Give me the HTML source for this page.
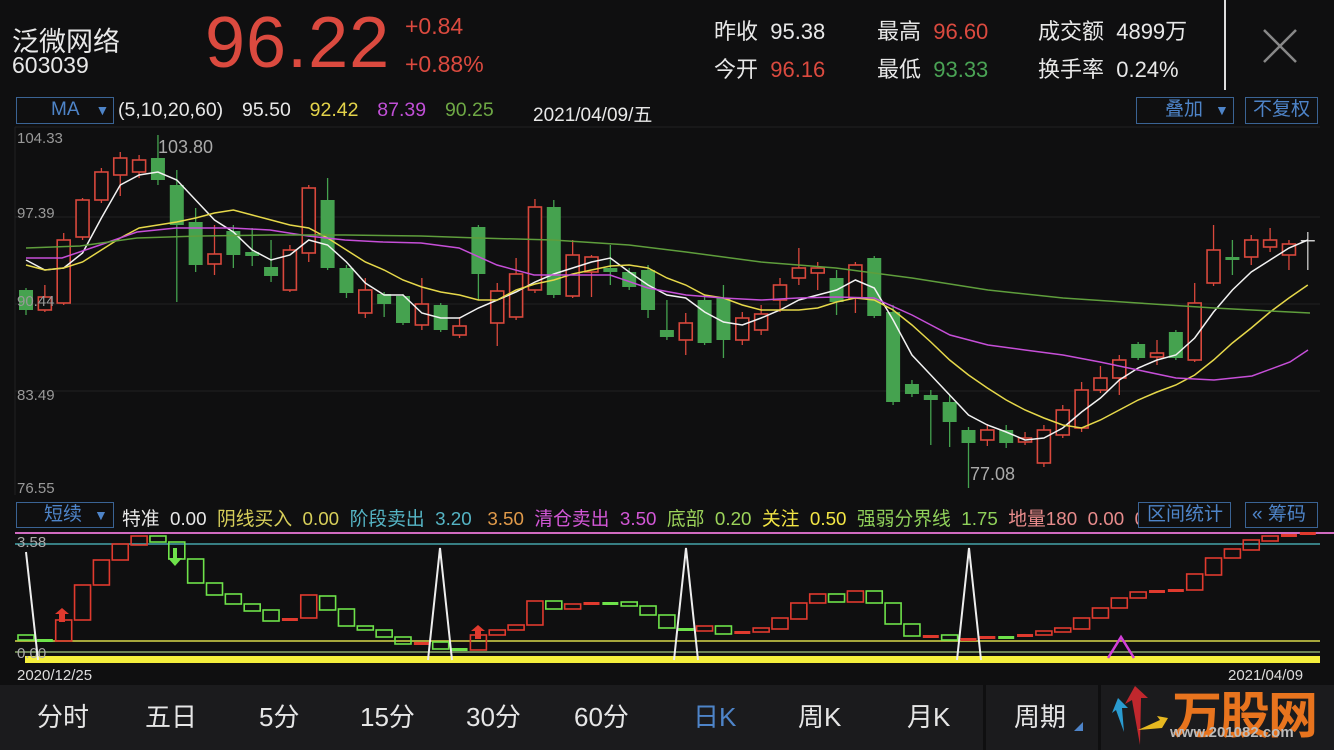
<!DOCTYPE html>
<html><head><meta charset="utf-8"><style>
body{margin:0;width:1334px;height:750px;background:#0f0f10;overflow:hidden;font-family:"Liberation Sans","Noto Sans CJK SC",sans-serif;color:#e8e8e8;position:relative}
.a{position:absolute;white-space:nowrap}
.r{color:#db4a3f}.g{color:#4aa355}
.box{position:absolute;border:1px solid #3a6394;color:#4e84c8;font-size:19px;box-sizing:border-box;line-height:24px}
.bb{position:absolute;top:685px;height:65px;font-size:26px;color:#e6e6e6;line-height:65px}
</style></head><body>
<div class="a" style="left:12px;top:20px;font-size:27px">泛微网络</div>
<div class="a" style="left:12px;top:52px;font-size:23px">603039</div>
<div class="a r" style="left:205px;top:2px;font-size:72px;letter-spacing:1px">96.22</div>
<div class="a r" style="left:405px;top:13px;font-size:23px">+0.84</div>
<div class="a r" style="left:405px;top:51px;font-size:23px">+0.88%</div>
<div class="a" style="left:714px;top:14px;font-size:22px">昨收&nbsp; 95.38</div>
<div class="a" style="left:714px;top:52px;font-size:22px">今开&nbsp; <span class="r">96.16</span></div>
<div class="a" style="left:877px;top:14px;font-size:22px">最高&nbsp; <span class="r">96.60</span></div>
<div class="a" style="left:877px;top:52px;font-size:22px">最低&nbsp; <span class="g">93.33</span></div>
<div class="a" style="left:1038px;top:14px;font-size:22px">成交额&nbsp; 4899万</div>
<div class="a" style="left:1038px;top:52px;font-size:22px">换手率&nbsp; 0.24%</div>
<div class="a" style="left:1224px;top:0;width:2px;height:90px;background:#ddd"></div>
<svg class="a" style="left:1262px;top:28px" width="36" height="36"><path d="M2 2L34 34M34 2L2 34" stroke="#888" stroke-width="2.5"/></svg>

<div class="box" style="left:16px;top:97px;width:98px;height:27px;padding-left:34px">MA<span style="font-size:14px;margin-left:16px">▼</span></div>
<div class="a" style="left:118px;top:99px;font-size:19.5px;word-spacing:4px">(5,10,20,60)&nbsp; 95.50&nbsp; <span style="color:#e3d34a">92.42</span>&nbsp; <span style="color:#c04fd6">87.39</span>&nbsp; <span style="color:#6ea845">90.25</span></div>
<div class="a" style="left:533px;top:100px;font-size:19px">2021/04/09/五</div>
<div class="box" style="left:1136px;top:97px;width:98px;height:27px;padding-left:28px">叠加<span style="font-size:14px;margin-left:12px">▼</span></div>
<div class="box" style="left:1245px;top:97px;width:73px;height:27px;padding-left:7px">不复权</div>

<div class="box" style="left:16px;top:502px;width:98px;height:26px;padding-left:27px">短续<span style="font-size:14px;margin-left:12px">▼</span></div>
<div class="a" style="left:122px;top:504px;font-size:18.8px">特准&nbsp; 0.00&nbsp; <span style="color:#d7cf5a">阴线买入&nbsp; 0.00</span>&nbsp; <span style="color:#55b4c4">阶段卖出&nbsp; 3.20</span>&nbsp;&nbsp; <span style="color:#e09a4a">3.50</span>&nbsp; <span style="color:#d257d6">清仓卖出&nbsp; 3.50</span>&nbsp; <span style="color:#9cd35a">底部&nbsp; 0.20</span>&nbsp; <span style="color:#f2e545">关注&nbsp; 0.50</span>&nbsp; <span style="color:#8fd05a">强弱分界线&nbsp; 1.75</span>&nbsp; <span style="color:#e88c8c">地量180&nbsp; 0.00&nbsp; 0.00</span></div>
<div class="box" style="left:1138px;top:502px;width:93px;height:26px;padding-left:8px;background:#0f0f10">区间统计</div>
<div class="box" style="left:1245px;top:502px;width:73px;height:26px;padding-left:6px;background:#0f0f10">« 筹码</div>

<svg id="c" class="a" style="left:0;top:0" width="1334" height="750"></svg>

<div class="a" style="left:0;top:685px;width:1334px;height:65px;background:#1b1b1d"></div>
<div class="a" style="left:983px;top:685px;width:3px;height:65px;background:#0f0f10"></div>
<div class="a" style="left:1098px;top:685px;width:3px;height:65px;background:#0f0f10"></div>
<div class="bb" style="left:37px">分时</div>
<div class="bb" style="left:145px">五日</div>
<div class="bb" style="left:259px">5分</div>
<div class="bb" style="left:360px">15分</div>
<div class="bb" style="left:466px">30分</div>
<div class="bb" style="left:574px">60分</div>
<div class="bb" style="left:693px;color:#4e84c8">日K</div>
<div class="bb" style="left:798px">周K</div>
<div class="bb" style="left:907px">月K</div>
<div class="bb" style="left:1014px">周期</div>
<div class="a" style="left:1074px;top:722px;width:0;height:0;border-left:9px solid transparent;border-bottom:9px solid #4e84c8"></div>
<div class="a" style="left:1172px;top:676px;font-size:50px;font-weight:bold;color:#e8741e;letter-spacing:-2px">万股网</div>
<div class="a" style="left:1170px;top:724px;font-size:15px;font-weight:bold;color:#bbb">www.201082.com</div>
<svg class="a" style="left:1110px;top:680px" width="60" height="70"><path d="M30 65L22 20L15 24L25 6L38 18L31 18Z" fill="#c0272d"/><path d="M14 52L6 30L2 33L8 18L18 28L12 28Z" fill="#2a9bd0"/><path d="M28 50L50 40L47 36L58 38L52 48Z" fill="#e6b820"/></svg>

<script>
var s='',X=function(i){return 26+(i-1)*18.85};
function L(x1,y1,x2,y2,c,w){s+='<line x1="'+x1+'" y1="'+y1+'" x2="'+x2+'" y2="'+y2+'" stroke="'+c+'" stroke-width="'+(w||1)+'"/>'}
function T(x,y,t,c,f){s+='<text x="'+x+'" y="'+y+'" fill="'+c+'" font-size="'+f+'" font-family="Liberation Sans,sans-serif">'+t+'</text>'}
[217,304,391].forEach(function(y){L(15,y,1320,y,'#222',1)});
L(15,127,1320,127,'#222',1);L(15,127,15,495,'#222',1);
var C=[[290,310,288,315,'g'],[297,310,285,312,'r'],[240,303,233,305,'r'],[200,237,198,240,'r'],[172,200,168,203,'r'],[158,175,152,196,'r'],[160,172,155,178,'r'],[158,180,135,185,'g'],[185,225,170,302,'g'],[222,265,208,272,'g'],[254,264,225,275,'r'],[231,255,225,268,'g'],[252,256,228,266,'g'],[267,276,240,282,'g'],[250,290,245,292,'r'],[188,253,185,262,'r'],[200,268,178,270,'g'],[268,293,265,298,'g'],[290,313,278,318,'r'],[294,304,292,317,'g'],[296,323,294,325,'g'],[304,325,278,330,'r'],[305,330,303,332,'g'],[326,335,317,338,'r'],[227,274,225,300,'g'],[291,323,283,346,'r'],[274,317,258,320,'r'],[207,290,199,293,'r'],[207,295,200,298,'g'],[255,296,240,298,'r'],[257,272,255,297,'r'],[268,272,245,285,'g'],[272,287,268,290,'g'],[270,310,265,318,'g'],[330,337,300,340,'g'],[323,340,313,355,'r'],[300,343,295,345,'g'],[298,340,285,358,'g'],[318,340,312,345,'r'],[314,330,305,335,'r'],[285,300,278,312,'r'],[268,278,248,285,'r'],[268,273,262,290,'r'],[278,302,270,315,'g'],[265,298,262,313,'r'],[258,316,256,318,'g'],[312,402,305,405,'g'],[384,394,380,397,'g'],[395,400,390,445,'g'],[402,422,395,447,'g'],[430,443,427,488,'g'],[430,440,424,446,'r'],[430,443,425,448,'g'],[438,442,432,445,'r'],[430,463,425,467,'r'],[410,435,405,438,'r'],[390,428,382,432,'r'],[378,390,366,393,'r'],[360,378,355,395,'r'],[344,358,342,360,'g'],[353,357,340,365,'r'],[332,358,330,360,'g'],[303,360,283,362,'r'],[250,283,225,286,'r'],[257,260,240,275,'g'],[240,257,235,265,'r'],[240,247,228,252,'r'],[244,255,240,270,'r'],[240,241,232,270,'w']];
var col={r:'#d9483c',g:'#45a24f',w:'#ccc'};
C.forEach(function(c,i){var x=X(i+1),k=col[c[4]];L(x,c[2],x,c[3],k,1.3);
 if(c[4]=='r')s+='<rect x="'+(x-6.5)+'" y="'+c[0]+'" width="13" height="'+Math.max(c[1]-c[0],1)+'" fill="#0f0f10" stroke="'+k+'" stroke-width="1.6"/>';
 else s+='<rect x="'+(x-7)+'" y="'+c[0]+'" width="14" height="'+Math.max(c[1]-c[0],1.5)+'" fill="'+k+'"/>';});
function P(pts,c){s+='<polyline fill="none" stroke="'+c+'" stroke-width="1.5" points="'+pts+'"/>'}
P([260,270,268,253,218,185,175,172,180,200,220,232,250,260,255,240,245,262,283,295,295,313,318,318,308,300,292,282,274,268,262,258,272,285,295,298,312,322,325,318,310,300,295,290,280,288,320,355,375,395,415,425,432,440,438,428,412,398,380,368,360,355,338,312,290,272,260,248,240].map(function(y,i){return X(i+1)+','+y}).join(' '),'#f2f2f2');
P([265,270,268,262,250,238,228,225,222,218,213,210,215,220,225,228,238,250,262,270,280,287,292,295,300,300,290,284,280,274,270,266,265,268,278,285,295,298,305,310,310,310,308,302,298,300,310,325,342,360,375,388,400,410,418,425,428,420,410,400,392,385,375,360,343,328,312,298,285].map(function(y,i){return X(i+1)+','+y}).join(' '),'#e6d84a');
P('26,258 62,258 100,245 137,232 176,228 232,228 270,230 308,236 345,240 383,242 421,243 459,248 497,265 534,275 572,275 610,275 648,288 686,295 723,298 761,300 798,298 836,297 874,298 912,315 950,335 988,345 1025,350 1063,355 1100,362 1138,370 1176,378 1214,380 1252,376 1290,362 1308,350','#c64fd8');
P('26,248 80,246 137,238 200,236 270,235 345,235 421,236 478,238 553,240 629,245 686,252 761,262 836,268 912,278 988,290 1063,298 1138,303 1214,308 1290,312 1310,313','#5f9e3c');
T(17,143,'104.33','#999',15);T(17,218,'97.39','#999',15);T(17,306,'90.44','#999',15);T(17,400,'83.49','#999',15);T(17,493,'76.55','#999',15);
T(158,153,'103.80','#aaa',18);T(970,480,'77.08','#aaa',18);
L(15,533,1334,533,'#d06bc0',2);L(15,544,1320,544,'#4fc1c8',1.3);L(15,641,1320,641,'#d9d94a',1.5);L(15,652,1320,652,'#8aa86a',1.5);
s+='<rect x="25" y="656" width="1295" height="7" fill="#f4ef3c"/>';
T(17,547,'3.58','#aaa',15);T(17,658,'0.00','#aaa',15);
var B=[[635,640,'g'],[639,641,'g'],[620,641,'r'],[585,620,'r'],[560,585,'r'],[544,560,'r'],[536,545,'r'],[536,542,'g'],[542,559,'g'],[559,583,'g'],[583,595,'g'],[594,604,'g'],[604,611,'g'],[610,621,'g'],[618,621,'r'],[595,618,'r'],[596,610,'g'],[609,626,'g'],[626,630,'g'],[630,637,'g'],[637,644,'g'],[642,644,'r'],[642,649,'g'],[648,650,'g'],[635,650,'r'],[630,635,'r'],[625,630,'r'],[601,625,'r'],[601,609,'g'],[604,609,'r'],[602,604,'r'],[602,604,'g'],[602,606,'g'],[606,615,'g'],[615,628,'g'],[628,631,'g'],[626,631,'r'],[626,634,'g'],[631,634,'r'],[628,632,'r'],[618,629,'r'],[603,619,'r'],[594,603,'r'],[594,602,'g'],[591,602,'r'],[591,603,'g'],[603,624,'g'],[624,636,'g'],[635,637,'r'],[635,640,'g'],[638,640,'r'],[636,639,'r'],[636,637,'g'],[634,637,'r'],[631,635,'r'],[628,632,'r'],[618,629,'r'],[608,618,'r'],[598,608,'r'],[592,598,'r'],[590,592,'r'],[589,591,'r'],[574,590,'r'],[558,575,'r'],[549,558,'r'],[540,550,'r'],[536,541,'r'],[534,537,'r'],[532,535,'r']];
B.forEach(function(b,i){var x=X(i+1),k=b[2]=='r'?'#e03a2e':'#6ee24a';var h=b[1]-b[0];
 if(h<=3)s+='<rect x="'+(x-8)+'" y="'+b[0]+'" width="16" height="3" fill="'+k+'"/>';
 else s+='<rect x="'+(x-8)+'" y="'+b[0]+'" width="16" height="'+h+'" fill="none" stroke="'+k+'" stroke-width="1.6"/>';});
function S(x){s+='<polyline fill="none" stroke="#eee" stroke-width="2" points="'+(x-12)+',660 '+x+',548 '+(x+12)+',660"/>'}
S(440);S(686);S(969);L(26,552,38,660,'#eee',2);
s+='<polyline fill="none" stroke="#d23fd8" stroke-width="2.5" points="1108,658 1121,637 1134,658"/>';
function A(x,y,c){s+='<path d="M'+(x-3)+' '+(y+14)+'V'+(y+6)+'H'+(x-7)+'L'+x+' '+y+'L'+(x+7)+' '+(y+6)+'H'+(x+3)+'V'+(y+14)+'Z" fill="'+c+'"/>'}
A(62,608,'#e03a2e');A(478,625,'#e03a2e');
s+='<path d="M173 548V558H168L175 566L182 558H177V548Z" fill="#6ee24a"/>';
T(17,680,'2020/12/25','#ddd',15);T(1228,680,'2021/04/09','#ddd',15);
document.getElementById('c').innerHTML=s;
</script>
</body></html>
